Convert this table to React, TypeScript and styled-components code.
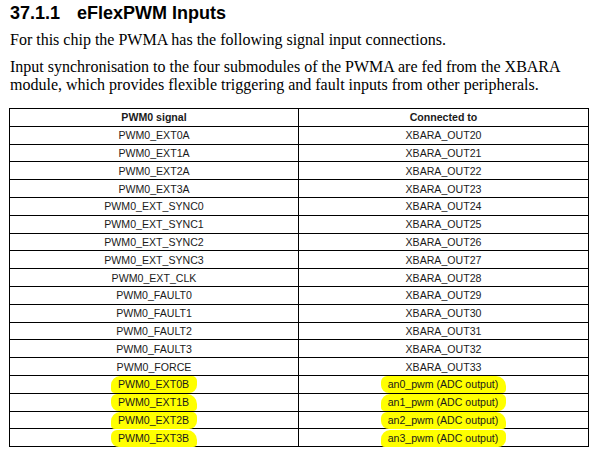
import React from "react"
import styled, { createGlobalStyle } from "styled-components"

const GlobalStyle = createGlobalStyle`
    html, body {
        margin: 0;
        padding: 0;
        background: #ffffff;
    }
`

const Page = styled.div`
    width: 599px;
    height: 462px;
    padding: 2px 0 0 10px;
    box-sizing: border-box;
    color: #000;
    overflow: hidden;
`

const Heading = styled.h2`
    margin: 0;
    font-family: "Liberation Sans", Arial, sans-serif;
    font-weight: bold;
    font-size: 18px;
    line-height: 22px;
    display: flex;
    gap: 17px;
`

const Para = styled.p<{ $top: number }>`
    margin: ${p => p.$top}px 0 0 0;
    font-family: "Liberation Serif", "Times New Roman", serif;
    font-size: 16px;
    line-height: 18px;
`

const Table = styled.table`
    margin: 14px 0 0 -1px;
    width: 579px;
    border-collapse: collapse;
    font-family: "Liberation Sans", Arial, sans-serif;
    font-size: 10.6px;
    table-layout: fixed;
`

const Cell = styled.td<{ $head?: boolean }>`
    border: 1.4px solid #000;
    height: 16.8px;
    padding: 0;
    text-align: center;
    vertical-align: middle;
    font-weight: ${p => (p.$head ? "bold" : "normal")};
    color: #1a1a1a;
`

const Mark = styled.span<{ $tilt: number }>`
    display: inline-block;
    background: #ffff00;
    padding: 2px 8px 3px 7px;
    margin: -3px 0;
    border-radius: ${p => (p.$tilt > 0 ? "6px 10px 4px 8px" : "9px 5px 8px 4px")};
`

const rows: [string, string][] = [
    ["PWM0_EXT0A", "XBARA_OUT20"],
    ["PWM0_EXT1A", "XBARA_OUT21"],
    ["PWM0_EXT2A", "XBARA_OUT22"],
    ["PWM0_EXT3A", "XBARA_OUT23"],
    ["PWM0_EXT_SYNC0", "XBARA_OUT24"],
    ["PWM0_EXT_SYNC1", "XBARA_OUT25"],
    ["PWM0_EXT_SYNC2", "XBARA_OUT26"],
    ["PWM0_EXT_SYNC3", "XBARA_OUT27"],
    ["PWM0_EXT_CLK", "XBARA_OUT28"],
    ["PWM0_FAULT0", "XBARA_OUT29"],
    ["PWM0_FAULT1", "XBARA_OUT30"],
    ["PWM0_FAULT2", "XBARA_OUT31"],
    ["PWM0_FAULT3", "XBARA_OUT32"],
    ["PWM0_FORCE", "XBARA_OUT33"],
]

const marked: [string, string][] = [0, 1, 2, 3].map(i => [
    `PWM0_EXT${i}B`,
    `an${i}_pwm (ADC output)`,
])

const App: React.FC = () => {
    return (
        <Page>
            <GlobalStyle />
            <Heading>
                <span>37.1.1</span>
                <span>eFlexPWM Inputs</span>
            </Heading>
            <Para $top={7}>For this chip the PWMA has the following signal input connections.</Para>
            <Para $top={9}>
                Input synchronisation to the four submodules of the PWMA are fed from the XBARA
                <br />
                module, which provides flexible triggering and fault inputs from other peripherals.
            </Para>
            <Table>
                <colgroup>
                    <col style={{ width: 289 }} />
                    <col style={{ width: 290 }} />
                </colgroup>
                <tbody>
                    <tr>
                        <Cell $head>PWM0 signal</Cell>
                        <Cell $head>Connected to</Cell>
                    </tr>
                    {rows.map(([a, b]) => (
                        <tr key={a}>
                            <Cell>{a}</Cell>
                            <Cell>{b}</Cell>
                        </tr>
                    ))}
                    {marked.map(([a, b], i) => (
                        <tr key={a}>
                            <Cell>
                                <Mark $tilt={i % 2}>{a}</Mark>
                            </Cell>
                            <Cell>
                                <Mark $tilt={(i + 1) % 2}>{b}</Mark>
                            </Cell>
                        </tr>
                    ))}
                </tbody>
            </Table>
        </Page>
    )
}

export default App
